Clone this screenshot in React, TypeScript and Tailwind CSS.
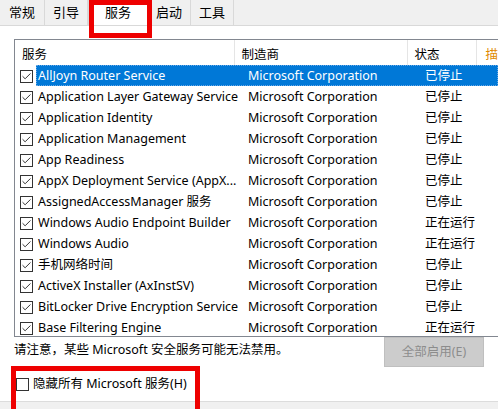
import { Check } from 'lucide-react'

const rows: [string, string][] = [
  ['AllJoyn Router Service', '已停止'],
  ['Application Layer Gateway Service', '已停止'],
  ['Application Identity', '已停止'],
  ['Application Management', '已停止'],
  ['App Readiness', '已停止'],
  ['AppX Deployment Service (AppX...', '已停止'],
  ['AssignedAccessManager 服务', '已停止'],
  ['Windows Audio Endpoint Builder', '正在运行'],
  ['Windows Audio', '正在运行'],
  ['手机网络时间', '已停止'],
  ['ActiveX Installer (AxInstSV)', '已停止'],
  ['BitLocker Drive Encryption Service', '已停止'],
  ['Base Filtering Engine', '正在运行'],
]

const tabs: [string, string][] = [
  ['常规', 'w-[45px]'],
  ['引导', 'w-[43px]'],
  ['服务', 'w-[60px]'],
  ['启动', 'w-[43px]'],
  ['工具', 'w-[43px]'],
]

function Box({ checked }: { checked: boolean }) {
  return (
    <div className="w-[13px] h-[13px] border border-[#333] bg-white flex items-center justify-center shrink-0">
      {checked && <Check className="w-[11px] h-[11px] text-[#222]" strokeWidth={2} />}
    </div>
  )
}

export default function App() {
  return (
    <div
      className="relative w-[498px] h-[409px] overflow-hidden bg-[#f0f0f0] text-black text-[12.5px]"
      style={{ fontFamily: '"Noto Sans", "Noto Sans CJK SC", sans-serif' }}
    >
      {/* tab strip */}
      <div className="flex h-[26px] border-b border-[#d9d9d9]">
        {tabs.map(([t, w], i) => (
          <div
            key={t}
            className={
              i === 2
                ? `${w} flex items-center justify-center bg-white border-x border-[#d9d9d9] text-[13px]`
                : `${w} flex items-center justify-center border-r border-[#d9d9d9] text-[13px]`
            }
          >
            {t}
          </div>
        ))}
      </div>

      {/* panel */}
      <div className="bg-white h-[376px] border-b border-[#dcdcdc] pl-[14px] pt-[13px]">
        <div className="border border-[#828790] border-r-0 h-[298px] overflow-hidden">
          <div className="flex h-[25px] items-center">
            <div className="w-[227px] pl-[7px] border-r border-[#e5e5e5] h-full flex items-center pt-[5px]">服务</div>
            <div className="w-[178px] pl-[6px] border-r border-[#e5e5e5] h-full flex items-center pt-[5px]">制造商</div>
            <div className="w-[71px] pl-[6px] border-r border-[#e5e5e5] h-full flex items-center pt-[5px]">状态</div>
            <div className="pl-[8px] pt-[5px] text-[#e08a00]">描</div>
          </div>
          {rows.map(([name, status], i) => (
            <div key={name} className="flex h-[21px] items-center">
              <div className="pl-[5px] pr-[3px] flex items-center pt-[1px]">
                <Box checked />
              </div>
              <div
                className={
                  i === 0
                    ? 'flex-1 flex h-full items-center pt-[2px] bg-[#0078d7] text-white outline outline-1 outline-dotted outline-[#6aa9e6] -outline-offset-1'
                    : 'flex-1 flex h-full items-center pt-[2px]'
                }
              >
                <div className="w-[212px] pl-[2px] whitespace-nowrap overflow-hidden">{name}</div>
                <div className="w-[178px] whitespace-nowrap">Microsoft Corporation</div>
                <div className="whitespace-nowrap -ml-[1px]">{status}</div>
              </div>
            </div>
          ))}
        </div>

        <div className="flex justify-between pr-[14px]">
          <div className="pt-[4px]">请注意，某些 Microsoft 安全服务可能无法禁用。</div>
          <div className="w-[100px] h-[30px] bg-[#cccccc] border border-[#bfbfbf] text-[#8c8c8c] flex items-center justify-center">
            全部启用(E)
          </div>
        </div>

        <div className="flex items-center gap-[4px] mt-[8px] pl-[2px]">
          <Box checked={false} />
          <span>隐藏所有 Microsoft 服务(H)</span>
        </div>
      </div>

      {/* annotation boxes */}
      <div className="absolute left-[89px] top-0 w-[63px] h-[38px] border-[5px] border-[#ee0000]" />
      <div className="absolute left-[11px] top-[366px] w-[189px] h-[50px] border-[5px] border-[#ee0000]" />
    </div>
  )
}
